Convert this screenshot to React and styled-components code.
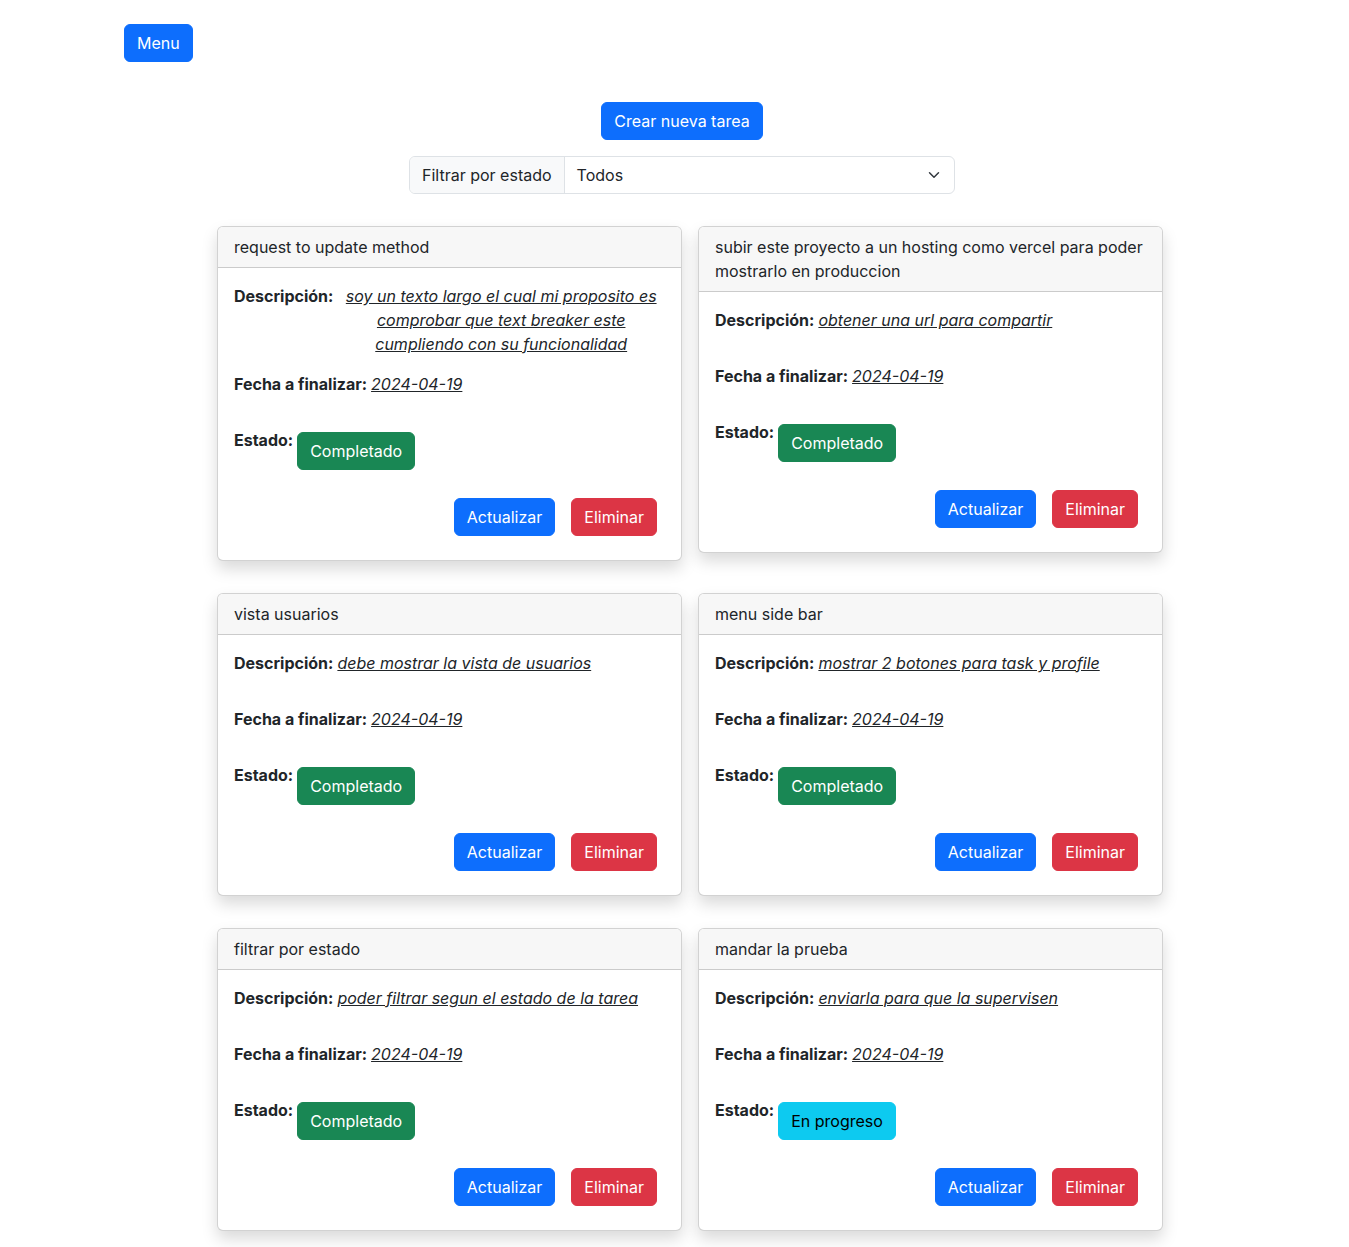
import styled, { createGlobalStyle } from 'styled-components';

const tasks = [
  {
    id: 1,
    title: 'request to update method',
    description:
      'soy un texto largo el cual mi proposito es comprobar que text breaker este cumpliendo con su funcionalidad',
    date: '2024-04-19',
    status: 'Completado',
  },
  {
    id: 2,
    title: 'subir este proyecto a un hosting como vercel para poder mostrarlo en produccion',
    description: 'obtener una url para compartir',
    date: '2024-04-19',
    status: 'Completado',
  },
  {
    id: 3,
    title: 'vista usuarios',
    description: 'debe mostrar la vista de usuarios',
    date: '2024-04-19',
    status: 'Completado',
  },
  {
    id: 4,
    title: 'menu side bar',
    description: 'mostrar 2 botones para task y profile',
    date: '2024-04-19',
    status: 'Completado',
  },
  {
    id: 5,
    title: 'filtrar por estado',
    description: 'poder filtrar segun el estado de la tarea',
    date: '2024-04-19',
    status: 'Completado',
  },
  {
    id: 6,
    title: 'mandar la prueba',
    description: 'enviarla para que la supervisen',
    date: '2024-04-19',
    status: 'En progreso',
  },
];

const App = () => {
  return (
    <>
      <GlobalStyle />
      <Page>
        <TopBar>
          <Button variant="primary">Menu</Button>
        </TopBar>

        <Main>
          <Button variant="primary">Crear nueva tarea</Button>

          <FilterGroup>
            <FilterLabel>Filtrar por estado</FilterLabel>
            <FilterSelect>
              <span>Todos</span>
              <svg width="16" height="12" viewBox="0 0 16 16" fill="none">
                <path
                  d="m2 5 6 6 6-6"
                  stroke="#343a40"
                  strokeWidth="2"
                  strokeLinecap="round"
                  strokeLinejoin="round"
                />
              </svg>
            </FilterSelect>
          </FilterGroup>

          <CardGrid>
            {tasks.map(task => (
              <Card key={task.id}>
                <CardHeader>{task.title}</CardHeader>
                <CardBody>
                  <Field>
                    <FieldLabel>Descripción:</FieldLabel>
                    <FieldValue>{task.description}</FieldValue>
                  </Field>
                  <Field>
                    <FieldLabel>Fecha a finalizar:</FieldLabel>
                    <FieldValue>{task.date}</FieldValue>
                  </Field>
                  <StatusRow>
                    <FieldLabel>Estado:</FieldLabel>
                    <StatusBadge variant={task.status === 'Completado' ? 'success' : 'info'}>
                      {task.status}
                    </StatusBadge>
                  </StatusRow>
                  <Actions>
                    <ActionButton variant="primary">Actualizar</ActionButton>
                    <ActionButton variant="danger">Eliminar</ActionButton>
                  </Actions>
                </CardBody>
              </Card>
            ))}
          </CardGrid>
        </Main>
      </Page>
    </>
  );
};

const GlobalStyle = createGlobalStyle`
  * {
    box-sizing: border-box;
  }

  body {
    margin: 0;
    background: #ffffff;
    color: #212529;
    font-family: Inter, "Noto Sans", "Liberation Sans", sans-serif;
    font-size: 16px;
    line-height: 1.5;
  }
`;

const variants = {
  primary: { bg: '#0d6efd', color: '#ffffff' },
  danger: { bg: '#dc3545', color: '#ffffff' },
  success: { bg: '#198754', color: '#ffffff' },
  info: { bg: '#0dcaf0', color: '#000000' },
};

const Page = styled.div`
  padding: 24px 0 40px;
`;

const TopBar = styled.div`
  display: flex;
  padding-left: 124px;
`;

const Button = styled.button`
  display: inline-block;
  padding: 6px 12px;
  border: 1px solid ${p => variants[p.variant].bg};
  border-radius: 6px;
  background: ${p => variants[p.variant].bg};
  color: ${p => variants[p.variant].color};
  font-family: inherit;
  font-size: 16px;
  line-height: 24px;
  cursor: pointer;
`;

const Main = styled.main`
  display: flex;
  flex-direction: column;
  align-items: center;
  gap: 16px;
  margin-top: 40px;
  padding-left: 15px;
`;

const FilterGroup = styled.div`
  display: flex;
  width: 546px;
  height: 38px;
  margin-bottom: 16px;
  border: 1px solid #dee2e6;
  border-radius: 6px;
  overflow: hidden;
`;

const FilterLabel = styled.div`
  display: flex;
  align-items: center;
  padding: 0 12px;
  background: #f8f9fa;
  border-right: 1px solid #dee2e6;
  white-space: nowrap;
`;

const FilterSelect = styled.div`
  flex: 1;
  display: flex;
  align-items: center;
  justify-content: space-between;
  padding: 0 12px;
`;

const CardGrid = styled.div`
  display: grid;
  grid-template-columns: 465px 465px;
  column-gap: 16px;
  row-gap: 32px;
  align-items: start;
  margin-left: 16px;
`;

const Card = styled.div`
  border: 1px solid rgba(0, 0, 0, 0.175);
  border-radius: 6px;
  background: #ffffff;
  box-shadow: 0 8px 16px rgba(0, 0, 0, 0.15);
  overflow: hidden;
`;

const CardHeader = styled.div`
  padding: 8px 16px;
  background: #f7f7f7;
  border-bottom: 1px solid rgba(0, 0, 0, 0.175);
`;

const CardBody = styled.div`
  padding: 16px;
`;

const Field = styled.div`
  display: flex;
  align-items: flex-start;
  gap: 4px;
  min-height: 40px;
  margin-bottom: 16px;
`;

const FieldLabel = styled.strong`
  font-weight: 700;
  white-space: nowrap;
`;

const FieldValue = styled.span`
  text-align: center;
  font-style: italic;
  text-decoration: underline;
`;

const StatusRow = styled.div`
  display: flex;
  align-items: flex-start;
  margin-bottom: 16px;
`;

const StatusBadge = styled(Button)`
  margin: 4px;
`;

const Actions = styled.div`
  display: flex;
  justify-content: flex-end;
`;

const ActionButton = styled(Button)`
  margin: 8px;
`;

export default App;
